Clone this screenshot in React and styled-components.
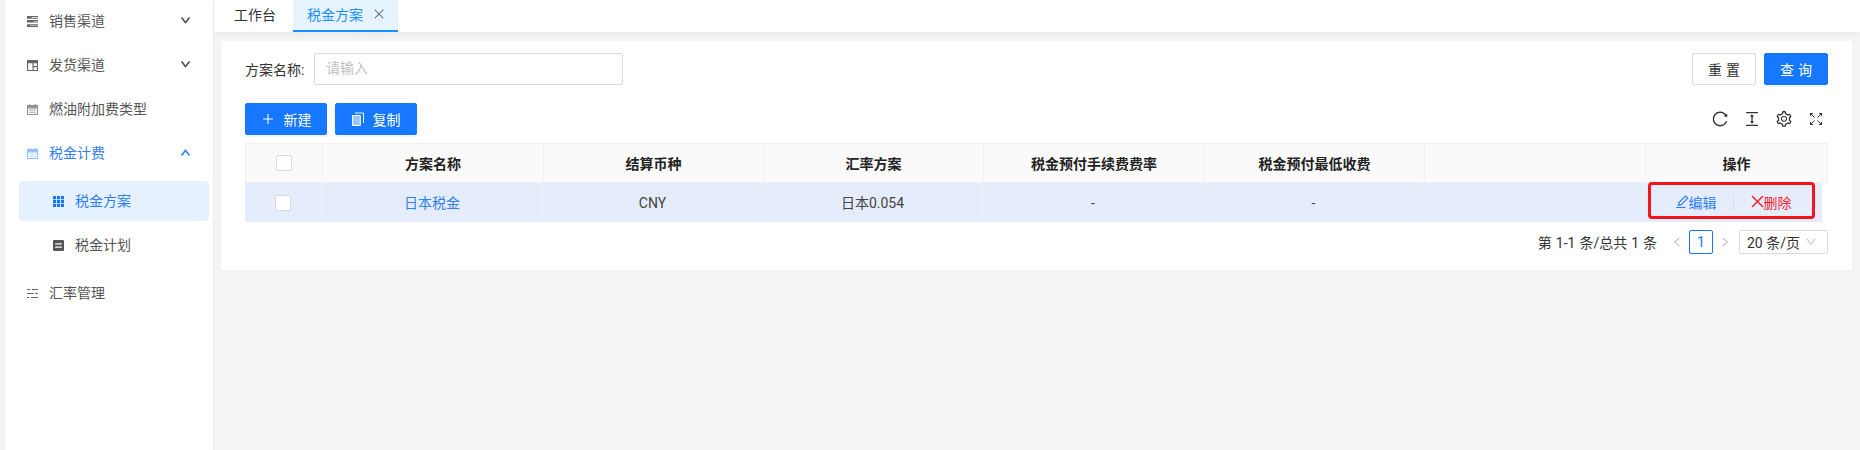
import React from "react";
import styled, { createGlobalStyle } from "styled-components";
import {
  AiOutlineClose,
  AiOutlineColumnHeight,
  AiOutlineDown,
  AiOutlineLeft,
  AiOutlinePlus,
  AiOutlineReload,
  AiOutlineRight,
  AiOutlineSetting,
  AiOutlineUp,
} from "react-icons/ai";

const GlobalStyle = createGlobalStyle`
  html, body {
    margin: 0;
    height: 450px;
    overflow: hidden;
    background: #f4f4f4;
    font-family: Roboto, "Noto Sans CJK SC", "Noto Sans", sans-serif;
    font-size: 14px;
    color: #333;
  }
  * { box-sizing: border-box; }
`;

const BLUE = "#1677ff";

const Glyph = ({ children, size = 11 }) => (
  <svg width={size} height={size} viewBox="0 0 10 10" fill="currentColor">
    {children}
  </svg>
);

const ListIcon = () => (
  <Glyph>
    <path d="M0 0h10v2.4H0zM0 3.6h10V6H0zM0 7.4h10V10H0z" />
    <path d="M4 1h6v.5H4zM6 4.5h4V5H6zM3 8.4h7v.5H3z" fill="#fff" />
  </Glyph>
);
const PanelIcon = () => (
  <Glyph>
    <path d="M0 0h10v10H0zM1 3v6h4V3zM6 3v2.5h3V3zM6 6.5V9h3V6.5z" fillRule="evenodd" />
  </Glyph>
);
const CalendarIcon = ({ light }) => (
  <Glyph>
    <path
      d="M2 0h1v1h4V0h1v1h2v9H0V1h2zM1 4v5h8V4z"
      fillRule="evenodd"
      opacity={light ? 0.8 : 0.7}
    />
    <path d="M2 5h6v1H2zM2 7h6v1H2z" opacity={light ? 0.5 : 0.6} />
  </Glyph>
);
const GridIcon = () => (
  <Glyph>
    <path d="M0 0h2.8v3H0zM3.6 0h2.8v3H3.6zM7.2 0H10v3H7.2zM0 3.6h2.8v2.8H0zM3.6 3.6h2.8v2.8H3.6zM7.2 3.6H10v2.8H7.2zM0 7h2.8v3H0zM3.6 7h2.8v3H3.6zM7.2 7H10v3H7.2z" />
  </Glyph>
);
const PlanIcon = () => (
  <Glyph>
    <path
      d="M1 0h8a1 1 0 011 1v8a1 1 0 01-1 1H1a1 1 0 01-1-1V1a1 1 0 011-1zM2 3v1.2h6V3zM2 5.8V7h6V5.8z"
      fillRule="evenodd"
    />
  </Glyph>
);
const RateIcon = () => (
  <Glyph>
    <path d="M0 .8h3v1H0zM4.5.8H10v1H4.5zM0 4.5h6v1H0zM7.5 4.5H10v1H7.5zM0 8.2h2v1H0zM3.5 8.2H10v1H3.5z" />
  </Glyph>
);
const CopyIcon = () => (
  <svg width="12" height="14" viewBox="0 0 12 14" fill="none">
    <path d="M3 1h8.5v10" stroke="#fff" strokeWidth="1" opacity="0.9" />
    <path d="M.5 3.5h7.8V13.5H.5z" fill="#9ac4ff" stroke="#fff" strokeWidth="1" />
  </svg>
);
const ExpandIcon = () => (
  <svg width="14" height="14" viewBox="0 0 14 14" fill="none">
    <path d="M2.5 2.5l3 3M11.5 2.5l-3 3M2.5 11.5l3-3M11.5 11.5l-3-3" stroke="#333" strokeWidth="1" />
    <path d="M1 1h3.4L1 4.4zM13 1H9.6L13 4.4zM1 13h3.4L1 9.6zM13 13H9.6L13 9.6z" fill="#333" />
  </svg>
);
const PenIcon = () => (
  <svg width="13" height="13" viewBox="0 0 13 13" fill="none" stroke="currentColor">
    <path d="M0 12.5h9.5" strokeWidth="1.2" />
    <path d="M2.5 10.2l.5-2.7L9.5 1l2.2 2.2-6.5 6.5z" strokeWidth="1.2" />
  </svg>
);
const CrossIcon = () => (
  <svg width="13" height="13" viewBox="0 0 13 13" fill="none" stroke="currentColor">
    <path d="M1 1l11 11M12 1L1 12" strokeWidth="1.5" />
  </svg>
);

const Page = styled.div`
  display: flex;
  height: 450px;
  padding-left: 5px;
`;
const Sidebar = styled.aside`
  width: 209px;
  flex: none;
  background: #fff;
  border-right: 1px solid #eee;
`;
const Menu = styled.ul`
  list-style: none;
  margin: -1px 0 0;
  padding: 0;
`;
const MenuRow = styled.li`
  display: flex;
  align-items: center;
  height: 44px;
  padding: 0 22px 2px;
  color: ${(p) => (p.$active ? "#2f80f5" : "#555")};
  > svg {
    margin: 2px 11px 0 0;
    color: ${(p) => (p.$active ? "#7cb0fb" : "#666")};
  }
`;
const Caret = styled.span`
  margin-left: auto;
  display: flex;
  color: ${(p) => (p.$active ? "#2f80f5" : "#555")};
  svg {
    stroke: currentColor;
    stroke-width: 90;
  }
`;
const SubMenu = styled.ul`
  list-style: none;
  margin: 6px 0;
  padding: 0 4px 0 14px;
  display: flex;
  flex-direction: column;
  gap: 4px;
`;
const SubRow = styled.li`
  display: flex;
  align-items: center;
  height: 40px;
  padding: 0 0 2px 34px;
  border-radius: 4px;
  background: ${(p) => (p.$active ? "#e6f1fe" : "transparent")};
  color: ${(p) => (p.$active ? "#2f80f5" : "#555")};
  svg {
    margin: 2px 11px 0 0;
    color: ${(p) => (p.$active ? BLUE : "#555")};
  }
`;
const Main = styled.main`
  flex: 1;
  min-width: 0;
  display: flex;
  flex-direction: column;
`;
const TabBar = styled.nav`
  display: flex;
  height: 32px;
  background: #fff;
  box-shadow: 0 2px 6px rgba(0, 0, 0, 0.06);
`;
const Tab = styled.div`
  display: flex;
  align-items: center;
  height: 32px;
  padding: ${(p) => (p.$active ? "0 12px 3px 14px" : "0 17px 3px 20px")};
  gap: 9px;
  color: ${(p) => (p.$active ? "#1890ff" : "#333")};
  background: ${(p) => (p.$active ? "#e6f4ff" : "#fff")};
  border-bottom: 2px solid ${(p) => (p.$active ? "#1890ff" : "transparent")};
  svg {
    color: #777;
  }
`;
const Card = styled.section`
  margin: 9px 8px 0 7px;
  height: 229px;
  background: #fff;
  padding: 12px 24px 0;
`;
const FilterRow = styled.div`
  display: flex;
  align-items: center;
  height: 32px;
`;
const Label = styled.label`
  width: 69px;
  color: #333;
`;
const FakeInput = styled.div`
  width: 309px;
  height: 32px;
  border: 1px solid #d9d9d9;
  border-radius: 2px;
  padding: 0 11px;
  line-height: 29px;
  color: #bfbfbf;
`;
const FilterActions = styled.div`
  margin-left: auto;
  display: flex;
  gap: 8px;
`;
const Button = styled.button`
  display: inline-flex;
  align-items: center;
  justify-content: center;
  width: ${(p) => p.$width || 64}px;
  height: 32px;
  padding: 0;
  border-radius: 2px;
  font: inherit;
  letter-spacing: ${(p) => (p.$spaced ? "4px" : "0")};
  text-indent: ${(p) => (p.$spaced ? "4px" : "0")};
  border: 1px solid ${(p) => (p.$primary ? BLUE : "#d9d9d9")};
  background: ${(p) => (p.$primary ? BLUE : "#fff")};
  color: ${(p) => (p.$primary ? "#fff" : "#333")};
  gap: 9px;
  box-shadow: 0 2px 0 ${(p) => (p.$primary ? "rgba(22,119,255,.08)" : "rgba(0,0,0,.02)")};
`;
const ToolRow = styled.div`
  display: flex;
  align-items: center;
  height: 32px;
  margin: 18px 0 8px;
`;
const ToolLeft = styled.div`
  display: flex;
  gap: 8px;
`;
const ToolIcons = styled.div`
  margin-left: auto;
  display: grid;
  grid-template-columns: repeat(4, 32px);
  justify-items: center;
  align-items: center;
  margin-right: -4px;
  color: #333;
  font-size: 18px;
  svg {
    display: block;
  }
`;
const Table = styled.div`
  position: relative;
  font-size: 14px;
`;
const Row = styled.div`
  display: grid;
  grid-template-columns: 77px 221px 220px 220px 221px 220px 221px 1fr;
  height: ${(p) => (p.$head ? 40 : 39)}px;
  background: ${(p) => (p.$head ? "#fafafa" : "#e5ecfb")};
  border: ${(p) => (p.$head ? "1px solid #f0f0f0" : "none")};
  margin-right: ${(p) => (p.$head ? "0" : "6px")};
  font-weight: ${(p) => (p.$head ? 700 : 400)};
  color: ${(p) => (p.$head ? "#222" : "#444")};
`;
const Cell = styled.div`
  display: flex;
  align-items: center;
  justify-content: center;
  padding-bottom: ${(p) => (p.$raised ? "2px" : "0")};
  border-right: ${(p) => (p.$last ? "none" : "1px solid #f0f0f0")};
`;
const LinkText = styled.span`
  color: #2f80f5;
`;
const Check = styled.span`
  width: 16px;
  height: 16px;
  background: #fff;
  border: 1px solid #d9d9d9;
  border-radius: 2px;
`;
const Actions = styled.div`
  display: flex;
  align-items: center;
  justify-content: center;
  height: 100%;
`;
const ActionBtn = styled.span`
  display: inline-flex;
  align-items: center;
  color: ${(p) => (p.$danger ? "#f5222d" : "#2f80f5")};
`;
const Divider = styled.span`
  width: 1px;
  height: 14px;
  background: #d6deee;
  margin: 0 17px 0 16px;
`;
const Highlight = styled.div`
  position: absolute;
  left: 1403px;
  top: 39px;
  width: 167px;
  height: 37px;
  border: 3px solid #f5141c;
  border-radius: 4px;
  pointer-events: none;
`;
const Pagination = styled.div`
  display: flex;
  align-items: center;
  justify-content: flex-end;
  height: 24px;
  margin-top: 8px;
  color: #333;
`;
const Total = styled.span`
  margin-right: 8px;
  word-spacing: 0.5px;
`;
const Arrow = styled.span`
  display: flex;
  width: 24px;
  justify-content: center;
  color: #bbb;
`;
const PageNo = styled.span`
  width: 24px;
  height: 24px;
  display: flex;
  align-items: center;
  justify-content: center;
  border: 1px solid ${BLUE};
  border-radius: 2px;
  color: ${BLUE};
`;
const PageSize = styled.div`
  display: flex;
  align-items: center;
  justify-content: space-between;
  width: 89px;
  height: 24px;
  margin-left: 2px;
  padding: 0 10px 0 7px;
  border: 1px solid #d9d9d9;
  border-radius: 2px;
  svg {
    color: #bbb;
  }
`;

const columns = ["方案名称", "结算币种", "汇率方案", "税金预付手续费费率", "税金预付最低收费", "", "操作"];

function App() {
  return (
    <Page>
      <GlobalStyle />
      <Sidebar>
        <Menu>
          <MenuRow>
            <ListIcon />
            销售渠道
            <Caret>
              <AiOutlineDown size={11} />
            </Caret>
          </MenuRow>
          <MenuRow>
            <PanelIcon />
            发货渠道
            <Caret>
              <AiOutlineDown size={11} />
            </Caret>
          </MenuRow>
          <MenuRow>
            <CalendarIcon />
            燃油附加费类型
          </MenuRow>
          <MenuRow $active>
            <CalendarIcon light />
            税金计费
            <Caret $active>
              <AiOutlineUp size={11} />
            </Caret>
          </MenuRow>
          <SubMenu>
            <SubRow $active>
              <GridIcon />
              税金方案
            </SubRow>
            <SubRow>
              <PlanIcon />
              税金计划
            </SubRow>
          </SubMenu>
          <MenuRow>
            <RateIcon />
            汇率管理
          </MenuRow>
        </Menu>
      </Sidebar>
      <Main>
        <TabBar>
          <Tab>工作台</Tab>
          <Tab $active>
            税金方案
            <AiOutlineClose size={14} />
          </Tab>
        </TabBar>
        <Card>
          <FilterRow>
            <Label>方案名称:</Label>
            <FakeInput>请输入</FakeInput>
            <FilterActions>
              <Button $spaced>重置</Button>
              <Button $primary $spaced>
                查询
              </Button>
            </FilterActions>
          </FilterRow>
          <ToolRow>
            <ToolLeft>
              <Button $primary $width={82}>
                <AiOutlinePlus size={14} />
                新建
              </Button>
              <Button $primary $width={82}>
                <CopyIcon />
                复制
              </Button>
            </ToolLeft>
            <ToolIcons>
              <AiOutlineReload />
              <AiOutlineColumnHeight />
              <AiOutlineSetting />
              <ExpandIcon />
            </ToolIcons>
          </ToolRow>
          <Table>
            <Row $head>
              <Cell>
                <Check />
              </Cell>
              {columns.map((c, i) => (
                <Cell key={i} $last={i === columns.length - 1}>
                  {c}
                </Cell>
              ))}
            </Row>
            <Row>
              <Cell>
                <Check />
              </Cell>
              <Cell $raised>
                <LinkText>日本税金</LinkText>
              </Cell>
              <Cell>CNY</Cell>
              <Cell $raised>日本0.054</Cell>
              <Cell>-</Cell>
              <Cell>-</Cell>
              <Cell />
              <Cell $last $raised>
                <Actions>
                  <ActionBtn>
                    <PenIcon />
                    编辑
                  </ActionBtn>
                  <Divider />
                  <ActionBtn $danger>
                    <CrossIcon />
                    删除
                  </ActionBtn>
                </Actions>
              </Cell>
            </Row>
            <Highlight />
          </Table>
          <Pagination>
            <Total>第 1-1 条/总共 1 条</Total>
            <Arrow>
              <AiOutlineLeft size={12} />
            </Arrow>
            <PageNo>1</PageNo>
            <Arrow>
              <AiOutlineRight size={12} />
            </Arrow>
            <PageSize>
              20 条/页
              <AiOutlineDown size={12} />
            </PageSize>
          </Pagination>
        </Card>
      </Main>
    </Page>
  );
}

export default App;
